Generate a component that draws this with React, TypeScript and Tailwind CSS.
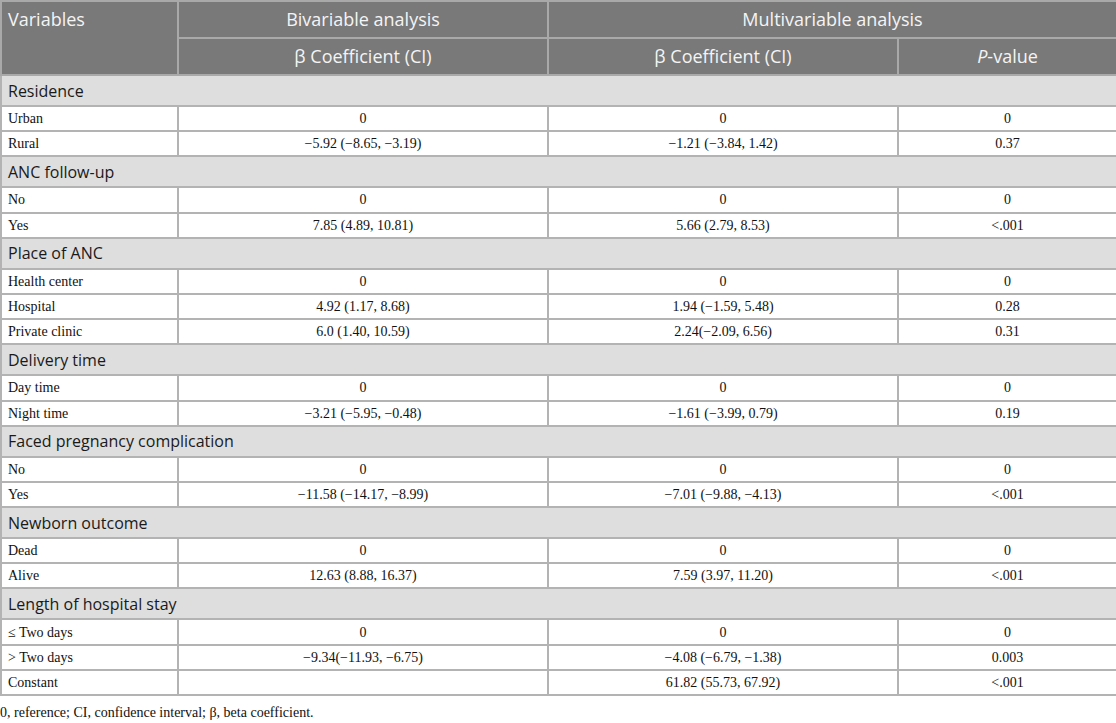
import React from "react";

type Row = { label: string; b: string; m: string; p: string };
type Section = { title: string; rows: Row[] };

const sections: Section[] = [
  {
    title: "Residence",
    rows: [
      { label: "Urban", b: "0", m: "0", p: "0" },
      { label: "Rural", b: "−5.92 (−8.65, −3.19)", m: "−1.21 (−3.84, 1.42)", p: "0.37" },
    ],
  },
  {
    title: "ANC follow-up",
    rows: [
      { label: "No", b: "0", m: "0", p: "0" },
      { label: "Yes", b: "7.85 (4.89, 10.81)", m: "5.66 (2.79, 8.53)", p: "<.001" },
    ],
  },
  {
    title: "Place of ANC",
    rows: [
      { label: "Health center", b: "0", m: "0", p: "0" },
      { label: "Hospital", b: "4.92 (1.17, 8.68)", m: "1.94 (−1.59, 5.48)", p: "0.28" },
      { label: "Private clinic", b: "6.0 (1.40, 10.59)", m: "2.24(−2.09, 6.56)", p: "0.31" },
    ],
  },
  {
    title: "Delivery time",
    rows: [
      { label: "Day time", b: "0", m: "0", p: "0" },
      { label: "Night time", b: "−3.21 (−5.95, −0.48)", m: "−1.61 (−3.99, 0.79)", p: "0.19" },
    ],
  },
  {
    title: "Faced pregnancy complication",
    rows: [
      { label: "No", b: "0", m: "0", p: "0" },
      { label: "Yes", b: "−11.58 (−14.17, −8.99)", m: "−7.01 (−9.88, −4.13)", p: "<.001" },
    ],
  },
  {
    title: "Newborn outcome",
    rows: [
      { label: "Dead", b: "0", m: "0", p: "0" },
      { label: "Alive", b: "12.63 (8.88, 16.37)", m: "7.59 (3.97, 11.20)", p: "<.001" },
    ],
  },
  {
    title: "Length of hospital stay",
    rows: [
      { label: "≤ Two days", b: "0", m: "0", p: "0" },
      { label: "> Two days", b: "−9.34(−11.93, −6.75)", m: "−4.08 (−6.79, −1.38)", p: "0.003" },
      { label: "Constant", b: "", m: "61.82 (55.73, 67.92)", p: "<.001" },
    ],
  },
];

const sans = "font-['Open_Sans','Noto_Sans',sans-serif]";
const serif = "font-['Liberation_Serif','Times_New_Roman',serif]";
const hcell = `${sans} text-[18px] font-normal text-center border-2 border-[#a9a9a9]`;

export default function App() {
  return (
    <div className="w-[1116px] h-[723px] bg-white overflow-hidden">
      <table className="w-[1116px] border-collapse table-fixed border-2 border-[#b3b3b3]">
        <colgroup>
          <col className="w-[177px]" />
          <col className="w-[370px]" />
          <col className="w-[350px]" />
          <col className="w-[219px]" />
        </colgroup>
        <thead>
          <tr className="h-[37px] bg-[#797979] text-[#f4f4f4]">
            <th
              rowSpan={2}
              className={`${sans} text-[18px] font-normal text-left align-top pl-[6px] pt-[4px] border-2 border-[#a9a9a9]`}
            >
              Variables
            </th>
            <th className={hcell}>Bivariable analysis</th>
            <th colSpan={2} className={hcell}>
              Multivariable analysis
            </th>
          </tr>
          <tr className="h-[37px] bg-[#797979] text-[#f4f4f4]">
            <th className={hcell}>β Coefficient (CI)</th>
            <th className={hcell}>β Coefficient (CI)</th>
            <th className={hcell}>
              <span className="italic">P</span>-value
            </th>
          </tr>
        </thead>
        <tbody>
          {sections.map((s) => (
            <React.Fragment key={s.title}>
              <tr className="h-[31px] bg-[#dedede]">
                <td
                  colSpan={4}
                  className={`${sans} text-[16px] text-[#1a1a1a] pl-[6px] border-2 border-[#b3b3b3]`}
                >
                  {s.title}
                </td>
              </tr>
              {s.rows.map((r, i) => (
                <tr key={i} className={`h-[25.2px] ${serif} text-[14px] text-[#111]`}>
                  <td className="pl-[6px] border-2 border-[#b3b3b3]">{r.label}</td>
                  <td className="text-center border-2 border-[#b3b3b3]">{r.b}</td>
                  <td className="text-center border-2 border-[#b3b3b3]">{r.m}</td>
                  <td className="text-center border-2 border-[#b3b3b3]">{r.p}</td>
                </tr>
              ))}
            </React.Fragment>
          ))}
        </tbody>
      </table>
      <p className={`${serif} text-[14px] leading-[20px] text-[#111] mt-[7px]`}>
        0, reference; CI, confidence interval; β, beta coefficient.
      </p>
    </div>
  );
}
